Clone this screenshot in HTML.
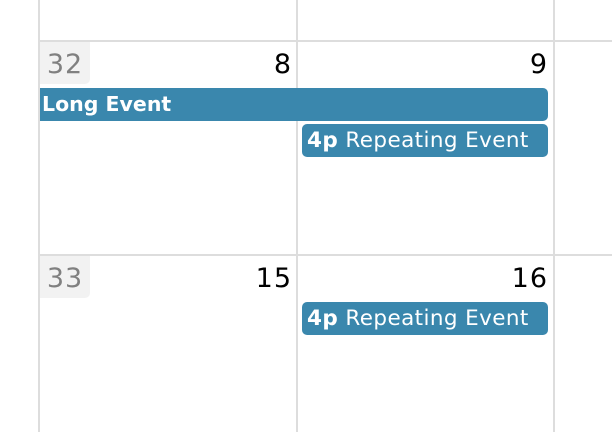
<!DOCTYPE html>
<html><head><style>
body{margin:0;width:612px;height:432px;background:#fff;position:relative;overflow:hidden;font-family:"DejaVu Sans","Liberation Sans",sans-serif;}
.v,.h{position:absolute;background:#ddd;}
.v{width:2px;top:0;height:432px;}
.h{height:2px;left:38px;width:574px;}
.wk{position:absolute;left:40px;width:50px;height:42px;background:#f2f2f2;color:#808080;font-size:27px;line-height:46px;text-align:center;border-bottom-right-radius:5px;letter-spacing:1px;}
.dn{position:absolute;font-size:27px;color:#000;text-align:right;width:70px;line-height:46px;letter-spacing:1px;}
.ev{position:absolute;background:#3a87ad;color:#fff;font-size:22.5px;line-height:33px;height:33px;box-sizing:border-box;white-space:nowrap;overflow:hidden;}
</style></head><body>
<div class="v" style="left:38px"></div>
<div class="v" style="left:296px"></div>
<div class="v" style="left:553px"></div>
<div class="h" style="top:40px"></div>
<div class="h" style="top:254px"></div>

<div class="wk" style="top:42px">32</div>
<div class="dn" style="left:222px;top:42px">8</div>
<div class="dn" style="left:478px;top:42px">9</div>
<div class="ev" style="left:40px;top:88px;width:508px;padding-left:2px;border-radius:0 5px 5px 0;font-weight:bold;font-size:20.5px">Long Event</div>
<div class="ev" style="left:302px;top:124px;width:246px;padding-left:5px;border-radius:5px;font-size:21.5px;letter-spacing:0.4px"><b>4p</b> Repeating Event</div>

<div class="wk" style="top:256px">33</div>
<div class="dn" style="left:222px;top:256px">15</div>
<div class="dn" style="left:478px;top:256px">16</div>
<div class="ev" style="left:302px;top:302px;width:246px;padding-left:5px;border-radius:5px;font-size:21.5px;letter-spacing:0.4px"><b>4p</b> Repeating Event</div>
</body></html>
